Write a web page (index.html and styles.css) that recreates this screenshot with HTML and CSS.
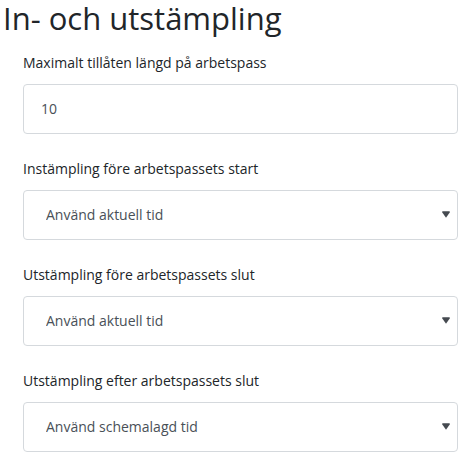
FILE: index.html
```html
<!DOCTYPE html>
<html lang="sv">
<head>
<meta charset="utf-8">
<title>In- och utstämpling</title>
<link rel="stylesheet" href="styles.css">
</head>
<body>
<h1 class="page-title">In- och utstämpling</h1>
<form class="settings">
  <div class="field-group">
    <label class="field-label" for="maxlen">Maximalt tillåten längd på arbetspass</label>
    <input class="field-input" id="maxlen" type="text" value="10">
  </div>
  <div class="field-group">
    <label class="field-label" for="before-start">Instämpling före arbetspassets start</label>
    <div class="select-wrap">
      <select class="field-input field-select" id="before-start">
        <option selected>Använd aktuell tid</option>
        <option>Använd schemalagd tid</option>
      </select>
      <svg class="select-caret" width="8" height="8" viewBox="0 0 8 8"><path d="M0.3 1.2H7.7V2.4L4 7.8L0.3 2.4Z"/></svg>
    </div>
  </div>
  <div class="field-group">
    <label class="field-label" for="before-end">Utstämpling före arbetspassets slut</label>
    <div class="select-wrap">
      <select class="field-input field-select" id="before-end">
        <option selected>Använd aktuell tid</option>
        <option>Använd schemalagd tid</option>
      </select>
      <svg class="select-caret" width="8" height="8" viewBox="0 0 8 8"><path d="M0.3 1.2H7.7V2.4L4 7.8L0.3 2.4Z"/></svg>
    </div>
  </div>
  <div class="field-group">
    <label class="field-label" for="after-end">Utstämpling efter arbetspassets slut</label>
    <div class="select-wrap">
      <select class="field-input field-select" id="after-end">
        <option>Använd aktuell tid</option>
        <option selected>Använd schemalagd tid</option>
      </select>
      <svg class="select-caret" width="8" height="8" viewBox="0 0 8 8"><path d="M0.3 1.2H7.7V2.4L4 7.8L0.3 2.4Z"/></svg>
    </div>
  </div>
</form>
</body>
</html>
```
FILE: styles.css
```css
* {
  box-sizing: border-box;
}

body {
  margin: 0;
  padding: 0 4px 0 3px;
  background: #fff;
  color: #212529;
  font-family: "Open Sans", "Noto Sans", sans-serif;
}

.page-title {
  margin: 0;
  font-size: 31px;
  line-height: 36px;
  font-weight: 400;
  color: #212529;
}

.settings {
  display: flex;
  flex-direction: column;
  gap: 25px;
  padding: 16.6px 0 0 20px;
}

.field-label {
  display: block;
  margin-bottom: 11px;
  font-size: 14px;
  line-height: 20px;
}

.field-input {
  display: block;
  width: 100%;
  height: 50px;
  margin: 0;
  padding: 0 17px;
  border: 1px solid #d5d9dd;
  border-radius: 4px;
  background: #fff;
  color: #495057;
  font-family: inherit;
  font-size: 14px;
  outline: none;
}

.select-wrap {
  position: relative;
}

.field-select {
  appearance: none;
  -webkit-appearance: none;
  padding-left: 22px;
  padding-right: 30px;
}

.select-caret {
  position: absolute;
  right: 8px;
  top: 20px;
  fill: #454a50;
  pointer-events: none;
}
```
